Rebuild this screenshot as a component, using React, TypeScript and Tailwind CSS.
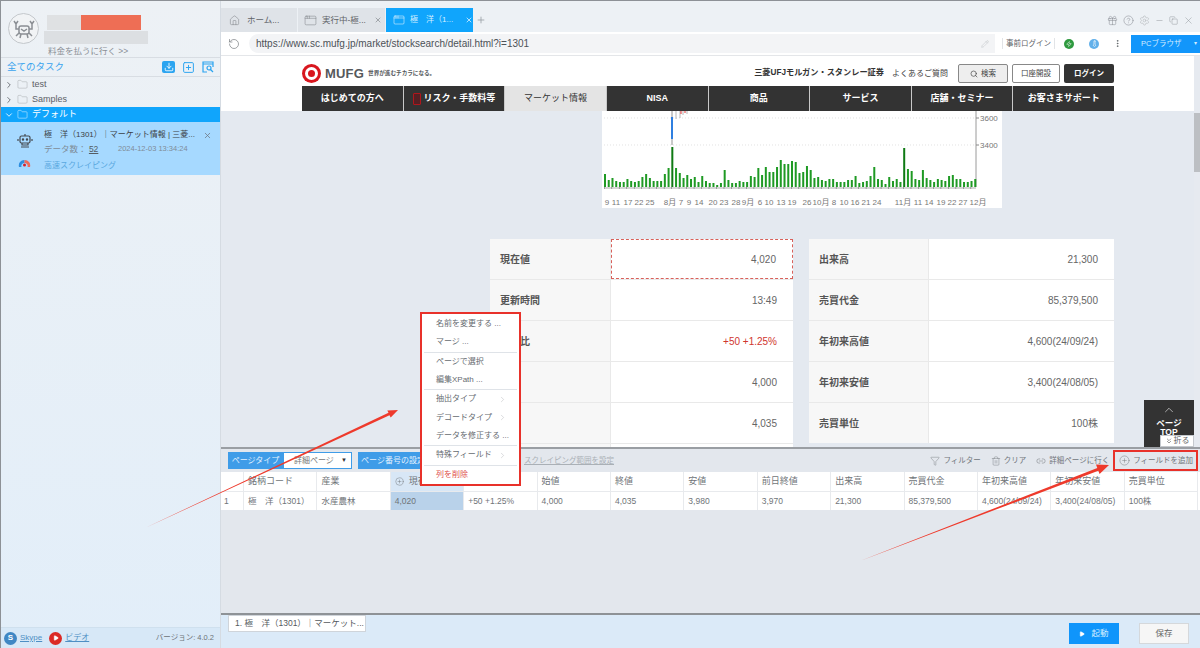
import { ChevronDown, ChevronRight, ChevronUp, ChevronsDown, Copy, Download, Filter, Gift, HelpCircle, Link2, Minus, MoreVertical, Pencil, Play, Plus, PlusCircle, RotateCw, Settings, Search, SquarePlus, Thermometer, Trash2, X, Zap, Folder, Home, AppWindow } from "lucide-react";

const navItems = ["はじめての方へ", "リスク・手数料等", "マーケット情報", "NISA", "商品", "サービス", "店舗・セミナー", "お客さまサポート"];

const leftRows = [
  { label: "現在値", value: "4,020", outlined: true },
  { label: "更新時間", value: "13:49" },
  { label: "前日比", value: "+50 +1.25%", red: true },
  { label: "始値", value: "4,000" },
  { label: "終値", value: "4,035" },
  { label: "安値", value: "3,980" },
];

const rightRows = [
  { label: "出来高", value: "21,300" },
  { label: "売買代金", value: "85,379,500" },
  { label: "年初来高値", value: "4,600(24/09/24)" },
  { label: "年初来安値", value: "3,400(24/08/05)" },
  { label: "売買単位", value: "100株" },
];

const columns = [
  { head: "銘柄コード", cell: "極　洋（1301）" },
  { head: "産業", cell: "水産農林" },
  { head: "現在値", cell: "4,020" },
  { head: "前日比", cell: "+50 +1.25%" },
  { head: "始値", cell: "4,000" },
  { head: "終値", cell: "4,035" },
  { head: "安値", cell: "3,980" },
  { head: "前日終値", cell: "3,970" },
  { head: "出来高", cell: "21,300" },
  { head: "売買代金", cell: "85,379,500" },
  { head: "年初来高値", cell: "4,600(24/09/24)" },
  { head: "年初来安値", cell: "3,400(24/08/05)" },
  { head: "売買単位", cell: "100株" },
];

const volumes = [13, 7, 9, 6, 5, 5, 8, 6, 5, 6, 10, 13, 9, 6, 6, 6, 13, 19, 40, 19, 14, 9, 12, 8, 10, 5, 11, 6, 4, 4, 2, 4, 17, 7, 4, 4, 6, 5, 5, 11, 10, 19, 12, 20, 15, 15, 20, 27, 23, 23, 26, 25, 14, 15, 21, 17, 9, 10, 7, 6, 8, 8, 5, 5, 5, 7, 7, 11, 4, 5, 6, 11, 20, 8, 7, 3, 10, 6, 8, 5, 39, 18, 16, 8, 7, 17, 9, 7, 5, 8, 7, 6, 11, 12, 8, 8, 5, 5, 6, 8];

const ticks: [string, number][] = [["9", 5], ["11", 14], ["17", 26], ["22", 37], ["25", 48], ["8月", 68], ["7", 79], ["9", 87], ["14", 97], ["20", 111], ["23", 122], ["28", 134], ["9月", 146], ["6", 158], ["10", 167], ["13", 179], ["19", 190], ["26", 205], ["10月", 219], ["8", 232], ["10", 242], ["16", 253], ["21", 264], ["24", 275], ["11月", 301], ["11", 316], ["14", 327], ["19", 339], ["22", 350], ["27", 361], ["12月", 376]];

function CrabAvatar() {
  return (
    <div className="flex h-[31px] w-[31px] shrink-0 items-center justify-center rounded-full border border-[#c4c8cc] bg-[#f1f3f5]">
      <svg width="24" height="22" viewBox="0 0 24 22" fill="none" stroke="#8b8f94" strokeWidth="1.5">
        <rect x="7" y="8" width="10" height="8" rx="2" />
        <path d="M9 11l3 2 3-2M7 11H4V6M17 11h3V6M2 3l2 3 2-3M18 3l2 3 2-3M7 15l-3 3M17 15l3 3M9 16l-1 4M15 16l1 4" />
      </svg>
    </div>
  );
}

function Sidebar() {
  return (
    <aside className="flex h-full w-[221px] shrink-0 flex-col border-r border-l border-r-[#d5dbe2] border-l-[#8d9196] bg-gradient-to-b from-[#edf1f5] to-[#e2eef9]">
      <div className="flex h-[57px] flex-col border-b border-[#d8dde3]">
        <div className="flex gap-[8px] pt-[12px] pl-[7px]">
          <CrabAvatar />
          <div className="flex flex-col gap-[1px] pt-[2px] blur-[0.6px]">
            <div className="flex h-[15px] w-[95px]">
              <div className="h-full w-[34px] bg-[#dfe1e3]" />
              <div className="h-full w-[60px] bg-[#ee6e55]" />
            </div>
            <div className="ml-[-3px] h-[13px] w-[104px] bg-[#dcdfe2]" />
          </div>
        </div>
        <p className="mt-[1px] pl-[47px] text-[8.5px] leading-[12px] text-[#8a8f95]">料金を払うに行く &gt;&gt;</p>
      </div>
      <div className="flex h-[19px] items-center justify-between border-b border-[#d8dde3] pr-[6px] pl-[6px]">
        <span className="text-[9.5px] text-[#39a3ee]">全てのタスク</span>
        <div className="flex items-center gap-[7px] text-[#2ba4f0]">
          <span className="flex h-[12px] w-[13px] items-center justify-center rounded-[2px] bg-[#2ba4f0]">
            <Download size={10} className="text-white" strokeWidth={2} />
          </span>
          <SquarePlus size={13} strokeWidth={1.8} />
          <svg width="12" height="12" viewBox="0 0 12 12" fill="none" stroke="currentColor" strokeWidth="1.2">
            <path d="M5 11H1V1h10v5M1 3h10" />
            <circle cx="7" cy="7" r="2" />
            <path d="M8.500 8.500L11 11" />
          </svg>
        </div>
      </div>
      <div className="flex h-[15px] items-center gap-[3px] pl-[3px] text-[#5c6066]">
        <ChevronRight size={10} />
        <Folder size={11} strokeWidth={1} className="text-[#a0a4a8]" />
        <span className="ml-[1px] text-[9px]">test</span>
      </div>
      <div className="flex h-[15px] items-center gap-[3px] pl-[3px] text-[#5c6066]">
        <ChevronRight size={10} />
        <Folder size={11} strokeWidth={1} className="text-[#a0a4a8]" />
        <span className="ml-[1px] text-[9px]">Samples</span>
      </div>
      <div className="flex h-[15px] items-center gap-[3px] bg-[#10a5fc] pl-[3px] text-white">
        <ChevronDown size={10} />
        <Folder size={11} strokeWidth={1} />
        <span className="ml-[1px] text-[9px]">デフォルト</span>
      </div>
      <div className="flex h-[53px] bg-[#a6d9ff]">
        <div className="flex w-[43px] flex-col items-center pt-[11px] pl-[4px]">
          <svg width="16" height="16" viewBox="0 0 16 16" fill="none" stroke="#454a50" strokeWidth="1.2">
            <rect x="3" y="3" width="10" height="7" rx="1.5" />
            <path d="M8 1v2M1 6v2M15 6v2M5 10v2h6v-2M4 14h8" />
            <circle cx="6" cy="6.5" r="0.6" fill="#454a50" />
            <circle cx="10" cy="6.5" r="0.6" fill="#454a50" />
          </svg>
          <svg className="mt-[8px]" width="13" height="11" viewBox="0 0 13 11">
            <path d="M1 10a5.5 5.5 0 0 1 5.5-7V6a3 3 0 0 0-3 4z" fill="#2e8fe0" />
            <path d="M6.500 3A5.500 5.500 0 0 1 12 10H9.500a3 3 0 0 0-3-4z" fill="#ef6a5a" />
            <circle cx="6.500" cy="8" r="1.500" fill="#d8202a" />
          </svg>
        </div>
        <div className="flex min-w-0 flex-1 flex-col pt-[6px]">
          <div className="flex items-center">
            <span className="w-[151px] text-[8px] leading-[14px] whitespace-nowrap text-[#3c4146]">極　洋（1301）｜マーケット情報 | 三菱...</span>
            <X size={9} className="ml-[8px] text-[#6d7680]" />
          </div>
          <div className="flex h-[14px] items-center text-[8.500px] text-[#7f8c98]">
            <span className="w-[74px]">データ数： <span className="text-[#555c63] underline">52</span></span>
            <span className="text-[7.500px]">2024-12-03 13:34:24</span>
          </div>
          <span className="mt-[3px] text-[8px] leading-[14px] text-[#5aa8e0]">高速スクレイピング</span>
        </div>
      </div>
      <div className="flex-1" />
      <div className="flex h-[21px] items-center border-t border-[#cfe0ee] bg-[#d7e8f7] pr-[6px] pl-[3px]">
        <span className="flex h-[13px] w-[13px] items-center justify-center rounded-full bg-[#3f87c4] text-[8px] font-bold text-white">S</span>
        <span className="ml-[3px] text-[8px] text-[#4e8fc4] underline">Skype</span>
        <span className="ml-[7px] flex h-[13px] w-[13px] items-center justify-center rounded-full bg-[#db2a25]">
          <Play size={6} fill="white" className="text-white" />
        </span>
        <span className="ml-[3px] text-[8px] text-[#4e8fc4] underline">ビデオ</span>
        <span className="ml-auto text-[7.500px] text-[#6d7278]">バージョン: 4.0.2</span>
      </div>
    </aside>
  );
}

function TabBar() {
  return (
    <div className="flex h-[31px] items-end bg-[#edf1f5]">
      <div className="flex h-[24px] w-[76px] items-center gap-[7px] bg-[#dfe3e8] pl-[8px] text-[#80858a]">
        <Home size={11} strokeWidth={1.2} />
        <span className="text-[8.500px] whitespace-nowrap text-[#5f6368]">ホーム...</span>
      </div>
      <div className="ml-px flex h-[24px] w-[87px] items-center bg-[#dfe3e8] pl-[6px] text-[#80858a]">
        <AppWindow size={13} strokeWidth={1} />
        <span className="ml-[5px] w-[43px] text-[8.500px] whitespace-nowrap text-[#5f6368]">実行中-極...</span>
        <X size={8} className="ml-[9px]" />
      </div>
      <div className="ml-px flex h-[24px] w-[87px] items-center bg-[#10a5fc] pl-[7px] text-white">
        <AppWindow size={12} strokeWidth={1} />
        <span className="ml-[5px] w-[49px] text-[8px] whitespace-nowrap text-[#d8f0ff]">極　洋（1...</span>
        <X size={8} className="ml-[6px]" />
      </div>
      <Plus size={10} className="mb-[7px] ml-[3px] text-[#9aa0a6]" />
      <div className="mb-[6px] ml-auto flex items-center gap-[5px] pr-[6px] text-[#8b9096]">
        <Gift size={11} strokeWidth={1.2} />
        <HelpCircle size={11} strokeWidth={1.2} />
        <Settings size={11} strokeWidth={1.2} className="text-[#b0b4b8]" />
        <Minus size={9} strokeWidth={1.2} />
        <Copy size={9} strokeWidth={1.2} />
        <X size={11} strokeWidth={1} />
      </div>
    </div>
  );
}

function AddressBar() {
  return (
    <div className="flex h-[24px] items-center border-b border-[#e4e6e9] bg-white">
      <RotateCw size={12} strokeWidth={1.300} className="ml-[7px] -scale-x-100 text-[#6f7478]" />
      <div className="ml-[9px] flex h-[19px] w-[746px] items-center justify-between rounded-l-full bg-[#f3f4f6] pr-[6px] pl-[7px]">
        <span className="text-[10px] text-[#4d5258]">https://www.sc.mufg.jp/market/stocksearch/detail.html?i=1301</span>
        <Pencil size={8} strokeWidth={1} className="text-[#a5a9ad]" />
      </div>
      <span className="ml-[7px] border-x border-[#e2e4e7] px-[3px] text-[7.500px] whitespace-nowrap text-[#5f6368]">事前ログイン</span>
      <span className="ml-[9px] flex h-[10px] w-[10px] items-center justify-center rounded-full bg-[#2f9a3f]">
        <Zap size={6} className="text-white" />
      </span>
      <span className="ml-[15px] flex h-[10px] w-[10px] items-center justify-center rounded-full bg-[#62b0ea]">
        <Thermometer size={7} className="text-white" />
      </span>
      <MoreVertical size={9} className="ml-[14px] text-[#55595e]" />
      <div className="ml-[9px] flex h-[18px] flex-1 items-center justify-between bg-[#1296fb] pr-[3px] pl-[10px] text-[7.500px] whitespace-nowrap text-[#d4ecff]">
        <span>PCブラウザ</span>
        <span className="text-[6px]">▾</span>
      </div>
    </div>
  );
}

function SiteHeader() {
  return (
    <header className="bg-white">
      <div className="ml-[81px] flex h-[30px] w-[812px] items-center pt-[5px]">
        <svg width="19" height="19" viewBox="0 0 19 19">
          <circle cx="9.500" cy="9.500" r="9.500" fill="#d8161e" />
          <circle cx="9.500" cy="9.500" r="6.500" fill="white" />
          <circle cx="9.500" cy="9.500" r="3.500" fill="#d8161e" />
        </svg>
        <span className="ml-[4px] text-[13px] font-bold tracking-[0.2px] text-[#55585b]">MUFG</span>
        <span className="ml-[4px] text-[5.600px] font-bold text-[#55585b]">世界が進むチカラになる。</span>
        <span className="ml-auto text-[8.200px] font-bold text-[#333]">三菱UFJモルガン・スタンレー証券</span>
        <span className="ml-[8px] text-[8px] text-[#444]">よくあるご質問</span>
        <span className="ml-[10px] flex h-[19px] w-[50px] items-center justify-center gap-[3px] rounded-[2px] border border-[#888] bg-[#eeeeee] text-[7.500px] text-[#444]">
          <Search size={8} />検索
        </span>
        <span className="ml-[4px] flex h-[19px] w-[48px] items-center justify-center rounded-[2px] border border-[#888] text-[7.500px] text-[#444]">口座開設</span>
        <span className="ml-[4px] flex h-[19px] w-[50px] items-center justify-center rounded-[2px] bg-[#333] text-[7.500px] font-bold text-white">ログイン</span>
      </div>
      <nav className="ml-[81px] flex h-[25px] w-[812px] gap-px bg-[#c9c9c9]">
        {navItems.map((item) => (
          <div
            key={item}
            className={`flex flex-1 items-center justify-center gap-[3px] text-[9px] font-bold ${
              item === "マーケット情報" ? "bg-[#e4e4e4] font-normal text-[#333]" : "bg-[#333] text-white"
            }`}
          >
            {item === "リスク・手数料等" && (
              <span className="h-[12px] w-[8px] rounded-[1px] border border-[#b0161c] bg-[#552024]" />
            )}
            {item}
          </div>
        ))}
      </nav>
    </header>
  );
}

function StockChart() {
  return (
    <div className="ml-[381px] h-[97px] w-[400px] bg-white">
      <svg width="400" height="97" viewBox="0 0 400 97" fontFamily="'Liberation Sans','Noto Sans CJK JP',sans-serif">
        <path d="M2 7H374M2 34H374" stroke="#d5d5d5" strokeWidth="0.700" strokeDasharray="1 2" />
        <path d="M374 0V76" stroke="#9a9a9a" />
        <path d="M374 7h3M374 34h3" stroke="#888" />
        <text x="378" y="10" fontSize="8" fill="#777">3600</text>
        <text x="378" y="37" fontSize="8" fill="#777">3400</text>
        <path d="M70 0V34" stroke="#777" strokeWidth="0.800" />
        <rect x="69" y="6" width="2" height="22" fill="#2f7fe0" />
        <path d="M74 0v8M78 0v7M81 0v4M85 0v3" stroke="#999" strokeWidth="0.700" />
        <path d="M79 0v3M83 0v2" stroke="#e03030" strokeWidth="1" />
        {volumes.map((height, index) => (
          <rect key={index} x={2 + index * 3.74} y={76 - height} width="2" height={height} fill={height > 30 ? "#0f7a14" : "#1f9a24"} />
        ))}
        <path d="M2 77H374" stroke="#888" strokeWidth="0.700" />
        <path d="M2 77H374" stroke="#777" strokeWidth="2" strokeDasharray="0.600 6.880" />
        {ticks.map(([label, x], index) => (
          <text key={index} x={x} y="94" fontSize="8" fill="#777" textAnchor="middle">
            {label}
          </text>
        ))}
      </svg>
    </div>
  );
}

function QuoteTable({ rows, width, labelWidth }: { rows: { label: string; value: string; red?: boolean; outlined?: boolean }[]; width: string; labelWidth: string }) {
  return (
    <div className={`flex flex-col gap-px bg-[#e9e9e9] ${width}`}>
      {rows.map((row) => (
        <div key={row.label} className="flex h-[40px] shrink-0 items-center bg-white">
          <div className={`flex h-full shrink-0 items-center border-r border-[#e9e9e9] bg-[#f7f7f7] pl-[10px] text-[10px] font-bold text-[#555] ${labelWidth}`}>{row.label}</div>
          <div
            className={`flex h-full flex-1 items-center justify-end pr-[16px] text-[10px] ${row.red ? "text-[#d0362e]" : "text-[#666]"} ${
              row.outlined ? "border border-dashed border-[#d8605a]" : ""
            }`}
          >
            {row.value}
          </div>
        </div>
      ))}
    </div>
  );
}

function WebPage() {
  return (
    <div className="relative h-[391px] overflow-hidden bg-[#e4e9f0]">
      <SiteHeader />
      <StockChart />
      <div className="mt-[31px] ml-[269px] flex items-start gap-[16px]">
        <QuoteTable rows={leftRows} width="w-[303px]" labelWidth="w-[121px]" />
        <QuoteTable rows={rightRows} width="w-[305px]" labelWidth="w-[120px]" />
      </div>
      <div className="absolute top-0 right-0 h-full w-[6px] bg-[#e6eaf0]" />
      <div className="absolute top-[57px] right-0 h-[59px] w-[6px] bg-[#bcbfc3]" />
      <div className="absolute top-[344px] left-[923px] flex h-[47px] w-[50px] flex-col items-center bg-[#333] pt-[3px] text-white">
        <ChevronUp size={14} strokeWidth={1} />
        <span className="mt-[1px] text-[8.500px] leading-[10px] font-bold">ページ</span>
        <span className="text-[8.500px] leading-[8px] font-bold">TOP</span>
      </div>
      <div className="absolute top-[379px] left-[939px] flex h-[12px] w-[34px] items-center justify-center gap-[1px] border border-[#c5c9ce] bg-white text-[8px] text-[#666]">
        <ChevronsDown size={8} />折る
      </div>
    </div>
  );
}

function DataPanel() {
  return (
    <div className="border-t-2 border-[#9a9ea3]">
      <div className="flex h-[23px] items-center pr-[7px] pl-[7px]">
        <span className="flex h-[17px] w-[55px] items-center justify-center bg-[#3f9ce8] text-[8px] whitespace-nowrap text-[#e2f1ff]">ページタイプ</span>
        <div className="flex h-[17px] w-[69px] items-center justify-between border border-[#3f9ce8] bg-white pr-[4px] pl-[10px] text-[8px] text-[#777]">
          詳細ページ
          <span className="text-[6px] text-[#333]">▼</span>
        </div>
        <span className="ml-[6px] flex h-[17px] w-[70px] items-center justify-center bg-[#3f9ce8] text-[8px] whitespace-nowrap text-[#e2f1ff]">ページ番号の設定</span>
        <span className="ml-[96px] text-[7.500px] whitespace-nowrap text-[#aab0b6] underline">スクレイピング範囲を設定</span>
        <div className="ml-auto flex items-center text-[7.500px] whitespace-nowrap text-[#70757a]">
          <Filter size={10} strokeWidth={1} />
          <span className="ml-[3px]">フィルター</span>
          <Trash2 size={10} strokeWidth={1} className="ml-[10px]" />
          <span className="ml-[3px]">クリア</span>
          <Link2 size={10} strokeWidth={1.200} className="ml-[10px]" />
          <span className="ml-[3px]">詳細ページに行く</span>
          <PlusCircle size={11} strokeWidth={1} className="ml-[10px]" />
          <span className="ml-[3px]">フィールドを追加</span>
        </div>
      </div>
      <div className="grid grid-cols-[23px_repeat(13,73.400px)] bg-white text-[8.500px] text-[#6f7478]">
        <div className="h-[20px] border-r border-b border-[#e8eaed]" />
        {columns.map((column) => (
          <div key={column.head} className={`flex h-[20px] items-center gap-[3px] border-r border-b border-[#e8eaed] pl-[4px] text-[9px] whitespace-nowrap ${column.head === "現在値" ? "bg-[#d8e7f6]" : ""}`}>
            {column.head === "現在値" && <PlusCircle size={9} strokeWidth={1.200} className="mr-[2px]" />}
            {column.head}
          </div>
        ))}
        <div className="flex h-[18px] items-center border-r border-[#e8eaed] pl-[3px]">1</div>
        {columns.map((column) => (
          <div key={column.head} className={`flex h-[18px] items-center border-r border-[#e8eaed] pl-[4px] whitespace-nowrap ${column.head === "現在値" ? "bg-[#b9d2ea]" : ""}`}>
            {column.cell}
          </div>
        ))}
      </div>
    </div>
  );
}

function ContextMenu() {
  const row = "flex h-[19px] items-center justify-between pr-[12px] pl-[14px] whitespace-nowrap";
  return (
    <div className="absolute top-[311px] left-[420px] flex h-[174px] w-[101px] flex-col border-2 border-[#e8312a] bg-white pt-[1px] text-[8px] text-[#666b70]">
      <div className={row}>名前を変更する ...</div>
      <div className={row}>マージ ...</div>
      <div className="mx-[2px] border-t border-[#dfe3e8]" />
      <div className={row}>ページで選択</div>
      <div className={row}>編集XPath ...</div>
      <div className="mx-[2px] border-t border-[#dfe3e8]" />
      <div className={row}>抽出タイプ<ChevronRight size={9} strokeWidth={1} className="text-[#a0a4a8]" /></div>
      <div className={row}>デコードタイプ<ChevronRight size={9} strokeWidth={1} className="text-[#a0a4a8]" /></div>
      <div className={row}>データを修正する ...</div>
      <div className="mx-[2px] border-t border-[#dfe3e8]" />
      <div className={row}>特殊フィールド<ChevronRight size={9} strokeWidth={1} className="text-[#a0a4a8]" /></div>
      <div className="mx-[2px] border-t border-[#dfe3e8]" />
      <div className={`${row} text-[#e0504a]`}>列を削除</div>
    </div>
  );
}

function Arrows() {
  return (
    <svg className="pointer-events-none absolute top-0 left-0" width="1200" height="648" viewBox="0 0 1200 648" fill="#ee3a2c">
      <path d="M145 527L389.500 414.200 390.700 416.600 398 409 387.300 409.400 388.500 411.800Z" />
      <path d="M860 560L1098.300 469.700 1099.600 473 1109 464 1096 463.600 1097.300 466.900Z" />
    </svg>
  );
}

export default function App() {
  return (
    <div className="relative h-[648px] w-[1200px] overflow-hidden border-t border-[#8d9196] bg-[#e3e7ed] font-['Liberation_Sans','Noto_Sans_CJK_JP',sans-serif]">
      <div className="flex h-full">
        <Sidebar />
        <main className="flex min-w-0 flex-1 flex-col">
          <TabBar />
          <AddressBar />
          <WebPage />
          <DataPanel />
          <div className="flex-1 border-b-2 border-[#8e9296]" />
          <div className="flex h-[33px] bg-[#dbeaf8] pl-[7px]">
            <div className="flex h-[17px] w-[138px] items-center border border-[#cfd4da] bg-white pl-[6px] text-[8.500px] whitespace-nowrap text-[#55595e]">1. 極　洋（1301）｜マーケット...</div>
            <span className="mt-[8px] ml-auto flex h-[21px] w-[50px] items-center justify-center gap-[6px] bg-[#0f95fb] text-[8.500px] text-[#d6eeff]">
              <Play size={6} fill="white" className="text-white" />起動
            </span>
            <span className="mt-[8px] mr-[11px] ml-[20px] flex h-[21px] w-[50px] items-center justify-center border border-[#d5d8db] bg-[#f6f6f6] text-[8.500px] text-[#666]">保存</span>
          </div>
        </main>
      </div>
      <ContextMenu />
      <div className="absolute top-[449px] left-[1113px] h-[21px] w-[85px] border-2 border-[#e8312a]" />
      <Arrows />
    </div>
  );
}
